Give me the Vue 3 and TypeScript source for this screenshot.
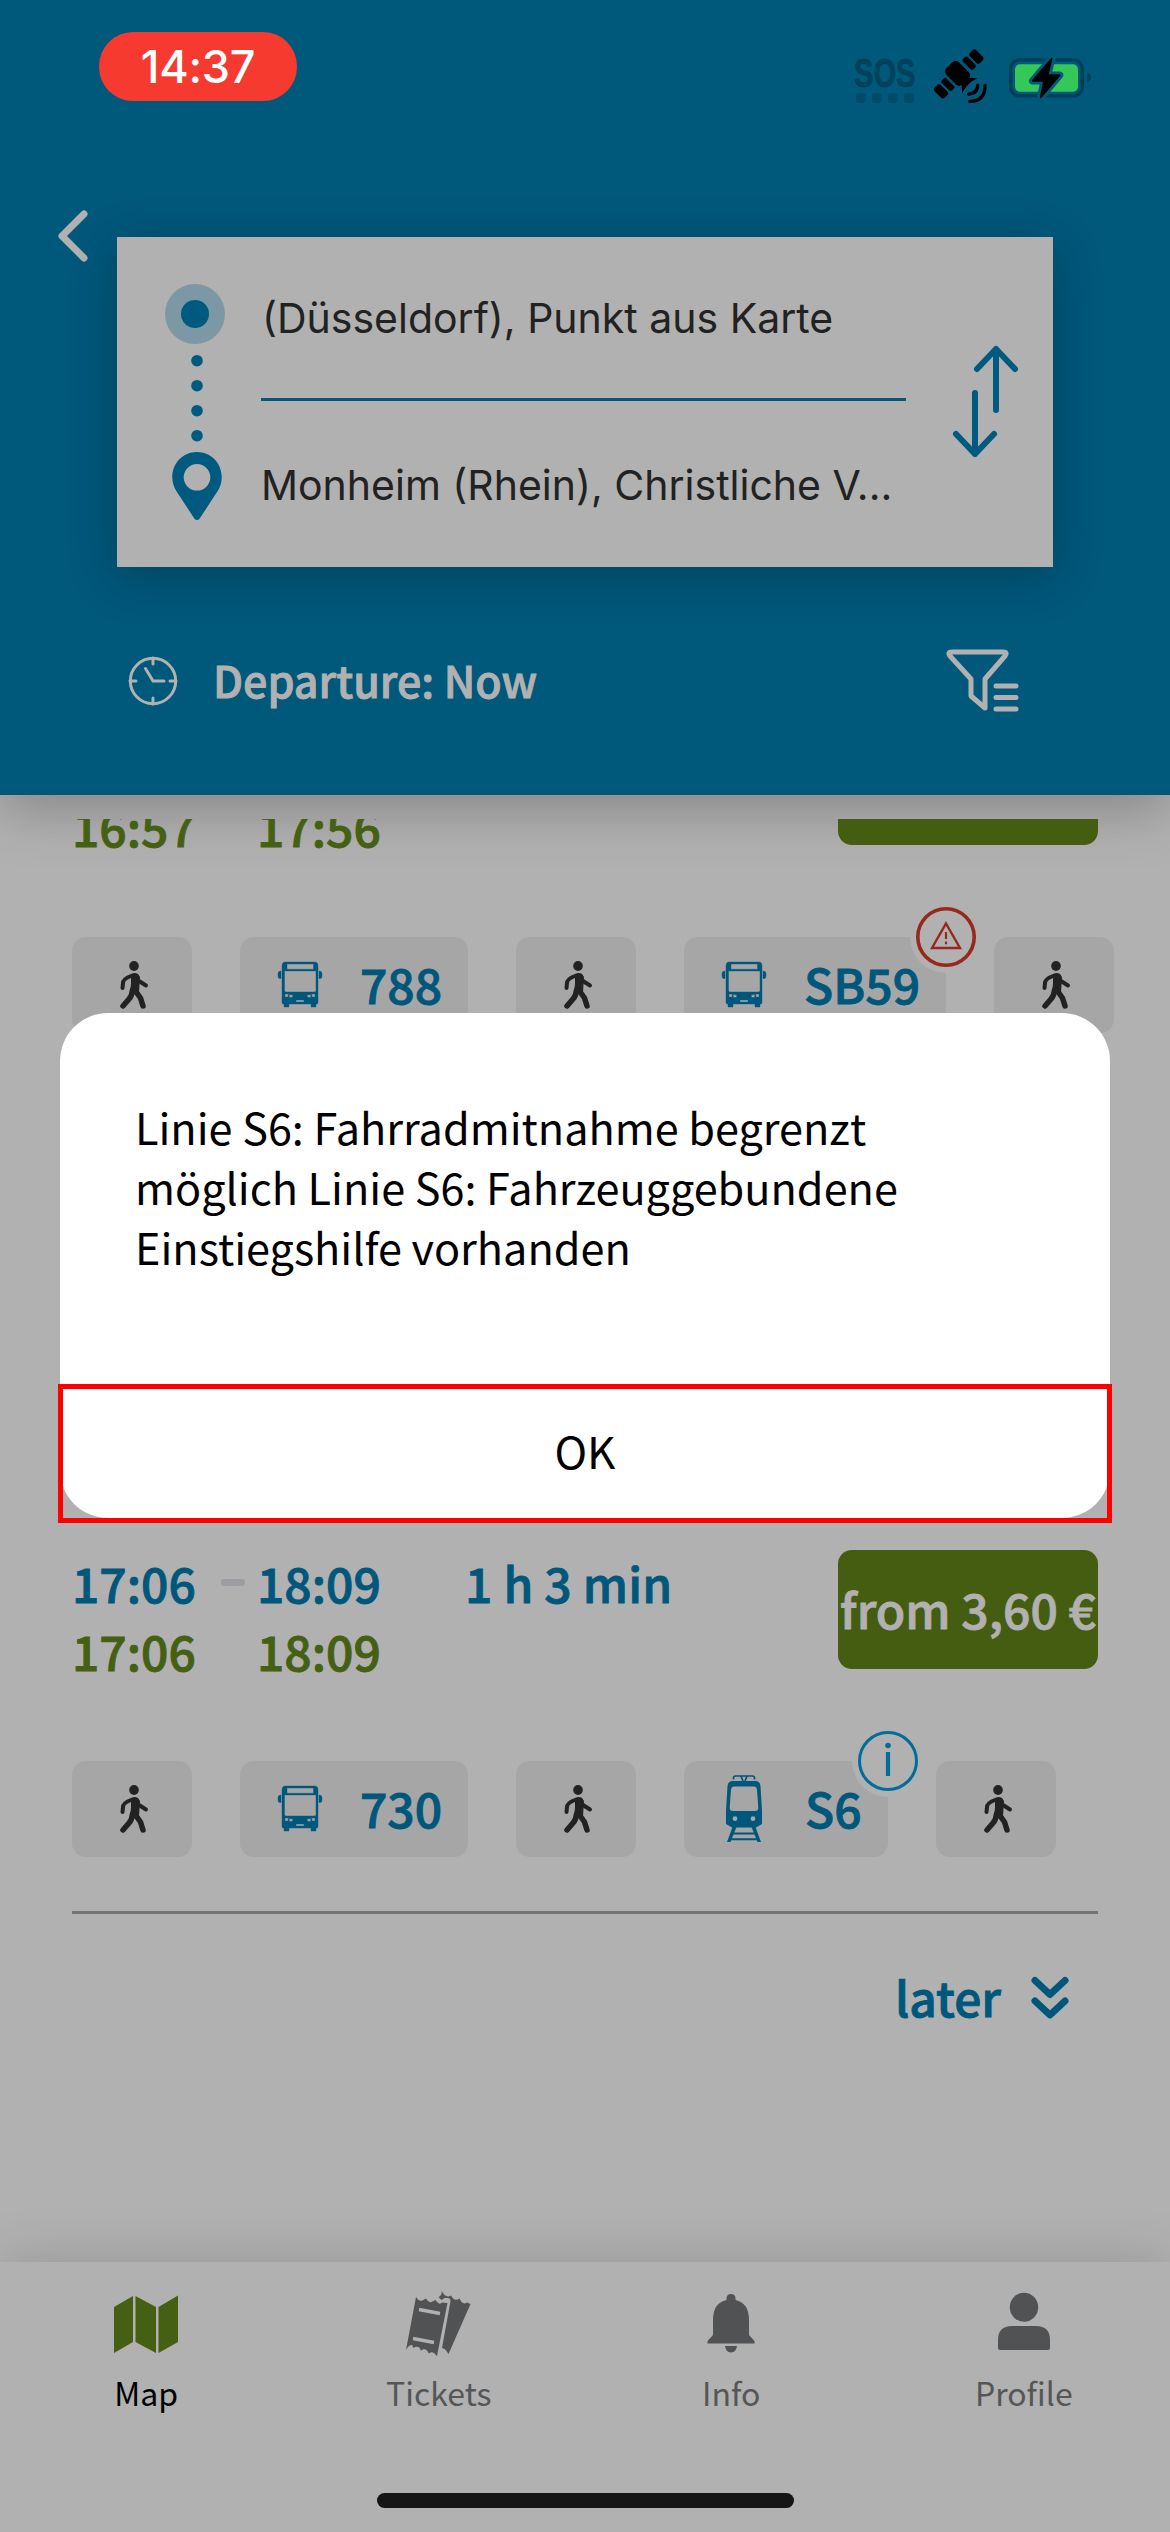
<script setup lang="ts">
type Leg = { kind: 'walk' | 'bus' | 'train'; line?: string; badge?: 'alert' | 'info' }

interface Trip {
  planned?: [string, string]
  actual: [string, string]
  duration?: string
  price?: string
  legs: Leg[]
}

const trips: Trip[] = [
  {
    actual: ['16:57', '17:56'],
    legs: [
      { kind: 'walk' },
      { kind: 'bus', line: '788' },
      { kind: 'walk' },
      { kind: 'bus', line: 'SB59', badge: 'alert' },
      { kind: 'walk' },
    ],
  },
  {
    planned: ['17:06', '18:09'],
    actual: ['17:06', '18:09'],
    duration: '1 h 3 min',
    price: 'from 3,60 €',
    legs: [
      { kind: 'walk' },
      { kind: 'bus', line: '730' },
      { kind: 'walk' },
      { kind: 'train', line: 'S6', badge: 'info' },
      { kind: 'walk' },
    ],
  },
]

const tabs = ['Map', 'Tickets', 'Info', 'Profile']
</script>

<template>
  <div class="screen">
    <header class="header">
      <div class="status">
        <span class="clock-pill">14:37</span>
        <div class="status-icons">
          <div class="sos">
            <span class="sos-text">SOS</span>
            <span class="sos-dots"><i v-for="n in 4" :key="n"></i></span>
          </div>
          <svg class="satellite" viewBox="400 92 163 160">
            <g transform="translate(476 165) rotate(-45)">
              <rect x="-87" y="-22" width="27" height="44" rx="10" />
              <rect x="-54" y="-22" width="20" height="44" rx="6" />
              <rect x="37" y="-22" width="20" height="44" rx="6" />
              <rect x="63" y="-21" width="27" height="44" rx="10" />
              <rect x="-27" y="-38" width="54" height="70" rx="15" />
              <path d="M-13 28h26l20 22q-32-14-66 0z" />
            </g>
            <path d="M535 198q0 26-28 27M557 199q0 48-46 48" fill="none" stroke="#000" stroke-width="10" stroke-linecap="round" />
          </svg>
          <svg class="battery" viewBox="627 110 249 125">
            <rect x="632" y="118" width="215" height="108" rx="27" fill="none" stroke="#003f59" stroke-width="10" />
            <path d="M861 156q12 4 12 16t-12 16z" fill="#003f59" />
            <rect x="645" y="131" width="189" height="83" rx="15" fill="#34c859" />
            <path d="M755 114l-57 67h34l-10 50 57-67h-36z" fill="#00587b" stroke="#00587b" stroke-width="22" stroke-linejoin="round" />
            <path d="M755 114l-57 67h34l-10 50 57-67h-36z" stroke="#000" stroke-width="5" stroke-linejoin="round" />
          </svg>
        </div>
      </div>

      <div class="search-row">
        <svg class="back" viewBox="0 0 30 52"><path d="M26 4L4 26l22 22" /></svg>
        <section class="search-card">
          <svg class="route" viewBox="0 0 60 208">
            <circle cx="30" cy="30" r="30" fill="#7c98a4" />
            <circle cx="30" cy="30" r="14" fill="#005a80" />
            <g fill="#005a80">
              <circle v-for="n in 4" :key="n" cx="32" :cy="51.7 + n * 25" r="5.8" />
              <path fill-rule="evenodd" d="M32 168C18 168 7.300 179 7.300 193c0 5 1 9 4 14l18 27.500q2.700 3 5.400 0l18-27.500c3-5 4-9 4-14C56.700 179 46 168 32 168zm0 12a13.300 13.300 0 1 1 0 26.600 13.300 13.300 0 0 1 0-26.600z" />
            </g>
          </svg>
          <div class="places">
            <div class="place from">(Düsseldorf), Punkt aus Karte</div>
            <div class="rule"></div>
            <div class="place to">Monheim (Rhein), Christliche V...</div>
          </div>
          <svg class="swap" viewBox="0 0 68 112">
            <path d="M45 65V4M26 24L45 4l19 20M24 48v61M5 89l19 20 19-20" />
          </svg>
        </section>
      </div>

      <div class="departure">
        <svg class="clock" viewBox="0 0 50 50">
          <circle cx="25" cy="25" r="22.700" />
          <path d="M25 2v6M25 42v6M2 25h6M42 25h6M17.500 12.500L25 25h11" />
        </svg>
        <span class="departure-text">Departure: Now</span>
        <svg class="filter" viewBox="0 0 74 64">
          <path d="M8 4h51q5 0 2 4L41 31v29L27 48V31L6 8q-3-4 2-4M52 38h20M52 49.500h20M52 61h20" />
        </svg>
      </div>
    </header>

    <main class="results">
      <div class="list">
        <article v-for="(trip, t) in trips" :key="t" class="trip">
          <div class="summary">
            <div class="times">
              <div class="time-row planned">
                <template v-if="trip.planned">
                  <span class="time">{{ trip.planned[0] }}</span>
                  <i class="dash"></i>
                  <span class="time">{{ trip.planned[1] }}</span>
                  <span class="duration">{{ trip.duration }}</span>
                </template>
              </div>
              <div class="time-row actual">
                <span class="time">{{ trip.actual[0] }}</span>
                <i class="dash blank"></i>
                <span class="time">{{ trip.actual[1] }}</span>
              </div>
            </div>
            <div class="price">{{ trip.price }}</div>
          </div>

          <div class="legs">
            <div v-for="(leg, l) in trip.legs" :key="l" class="leg" :class="leg.kind">
              <svg v-if="leg.kind === 'walk'" class="walk-icon" viewBox="0 0 28 48">
                <ellipse cx="14" cy="5" rx="4.800" ry="5" />
                <path d="M11 13q4-2 7 0l2 3-1 15-8 2-1-2 1-8z" />
                <g fill="none" stroke="#222" stroke-linecap="round" stroke-linejoin="round">
                  <path d="M11 15q-8 3-8 7l-.5 5" stroke-width="4" />
                  <path d="M19 20l7 4.500" stroke-width="4" />
                  <path d="M12.500 29q-.5 6-3.500 9l-6 7" stroke-width="5.500" />
                  <path d="M15.500 30l5 7 2.500 8" stroke-width="5.500" />
                </g>
              </svg>
              <svg v-else-if="leg.kind === 'bus'" class="bus-icon" viewBox="0 0 44 45">
                <path fill-rule="evenodd" d="M7 0h30q3 0 3 4v37q0 1-1.500 1H38v3h-5v-3H11v3H6v-3q-2 0-2-1V4q0-4 3-4zM9 2v5.300h26.500V2zM6.500 9v19.500q0 1.500 2 1.500h27.500q2 0 2-1.500V9zM7 32v3h3.200v-3zM11 32.500l4 .5-.8 2.500h-2.700zM37 32v3h-3.200v-3zM33 32.500l-4 .5.800 2.500h2.700zM18 38v2h8v-2z" />
                <path d="M3 9v7.500H1.500Q0 16.500 0 14v-2.500Q0 9 3 9zM41 9v7.500h1.500Q44 16.500 44 14v-2.500Q44 9 41 9z" />
              </svg>
              <svg v-else class="train-icon" viewBox="0 0 36 67">
                <path d="M7.500 4.500V3q0-2 2-2h17q2 0 2 2v1.500M15 1l2 5M21 1l-2 5" fill="none" stroke="#00577c" stroke-width="1.700" />
                <path fill-rule="evenodd" d="M7 6h22q5 0 5.500 5L36 36v13l-6 3.500H6L0 49V36l1.500-25Q2 6 7 6zM8 11.500q-2.500 0-3 3L3.700 33q0 3 3.300 3h22q3.300 0 3.300-3L31 14.500q-.5-3-3-3zM9 41.300a2.400 2.400 0 1 0 0 4.800 2.400 2.400 0 0 0 0-4.800zM27 41.300a2.400 2.400 0 1 0 0 4.800 2.400 2.400 0 0 0 0-4.800z" />
                <path d="M7 58.500h22M5 64.300h26" fill="none" stroke="#00577c" stroke-width="2" />
                <path d="M6.500 52L1 67h3.500L10.500 52zM29.500 52L35 67h-3.500L25.500 52z" />
              </svg>
              <span v-if="leg.line" class="line">{{ leg.line }}</span>

              <svg v-if="leg.badge === 'alert'" class="badge" viewBox="0 0 72 72">
                <circle cx="36" cy="36" r="36" fill="#b1b1b1" />
                <g fill="none" stroke="#96281d">
                  <circle cx="36" cy="36" r="28.200" stroke-width="3.600" />
                  <path d="M36 22.500l14 24.500H22z" stroke-width="2.400" />
                  <path d="M36 31v7M36 40.500v2.800" stroke-width="2.200" />
                </g>
              </svg>
              <svg v-if="leg.badge === 'info'" class="badge" viewBox="0 0 72 72">
                <circle cx="36" cy="36" r="36" fill="#b1b1b1" />
                <circle cx="36" cy="36" r="28.500" fill="none" stroke="#006d9b" stroke-width="3" />
                <circle cx="36" cy="20.500" r="2.800" fill="#006d9b" />
                <path d="M36 27v24" stroke="#006d9b" stroke-width="4.200" />
              </svg>
            </div>
          </div>
          <div class="divider"></div>
        </article>

        <div class="later">
          <span class="later-text">later</span>
          <svg class="later-icon" viewBox="0 0 38 44">
            <path d="M4 4.500l15 14 15-14M4 25l15 14 15-14" />
          </svg>
        </div>
      </div>
    </main>

    <nav class="tabbar">
      <div class="tabs">
        <div v-for="tab in tabs" :key="tab" class="tab" :class="{ active: tab === 'Map' }">
          <svg v-if="tab === 'Map'" class="tab-icon" viewBox="0 0 66 66">
            <path fill="#456013" d="M1 16L20 5v46L1 62zM22.500 5l20.500 11v46L22.500 51zM45.500 16L65 4.500v46.500L45.500 62z" />
          </svg>
          <svg v-else-if="tab === 'Tickets'" class="tab-icon" viewBox="0 0 66 66">
            <path d="M10 6l2 2.500q3 2.500 6 0l2-1 1.500 2q3 3 6 .5l2-1 1.500 2q3 3 5 .5l5.500.5-10.500 53-2.500-2.500q-3-2.500-5.500 0l-2-3q-3-2.500-6 .2l-1.500-3q-3-2-6 .3l-1.500-3Q3 53.500 0 59z" />
            <path d="M35.500 0l3 4q3 2.500 6.500.5l2 3q3 2.500 6.500 0l2 3.500q3 2.500 5.500.5l3.500 1.500-22 50-2-3q-1.500-2.500-4.500-3l8.500-47q0-3-3-3h-3l-3 2-3-3q4-2 3-6z" />
            <path d="M13 18.500l21 4M7 47.500l21 4" stroke="#b1b1b1" stroke-width="3.400" />
          </svg>
          <svg v-else-if="tab === 'Info'" class="tab-icon" viewBox="0 0 66 66">
            <path d="M28.500 9V7.500q0-4.500 4.500-4.500t4.500 4.500V9Q51 12 51 29v15l5.500 6v2.500h-47V50l5.500-6V29Q15 12 28.500 9zM27 55h12q-1 6.500-6 6.500T27 55z" />
          </svg>
          <svg v-else class="tab-icon" viewBox="0 0 66 66">
            <ellipse cx="33" cy="16.300" rx="14.200" ry="14.500" />
            <path d="M7 57V49q0-14 14-14h24q14 0 14 14v8q0 2-2 2H9q-2 0-2-2z" />
          </svg>
          <span class="tab-label">{{ tab }}</span>
        </div>
      </div>
      <div class="home-indicator"></div>
    </nav>

    <div class="dialog">
      <p class="message">
        Linie S6: Fahrradmitnahme begrenzt<br />möglich Linie S6: Fahrzeuggebundene<br />Einstiegshilfe vorhanden
      </p>
      <button class="ok">OK</button>
      <div class="focus-frame"></div>
    </div>
  </div>
</template>

<style>
body {
  margin: 0;
  background: #b1b1b1;
}
</style>

<style scoped>
.screen {
  position: relative;
  display: flex;
  flex-direction: column;
  width: 1170px;
  height: 2532px;
  overflow: hidden;
  background: #b1b1b1;
  font-family: 'Noto Sans CJK SC', 'Noto Sans', sans-serif;
}
svg {
  display: block;
  flex: none;
  overflow: visible;
}
.header {
  box-sizing: border-box;
  height: 795px;
  flex: none;
  background: #00587b;
  box-shadow: 0 12px 54px rgba(0, 0, 0, 0.26);
}
.status {
  display: flex;
  justify-content: space-between;
  height: 210px;
  padding: 32px 81px 0 99px;
  box-sizing: border-box;
}
.clock-pill {
  width: 198px;
  height: 69px;
  border-radius: 34px;
  background: #f63a30;
  color: #fff;
  font: 500 45px/70px Inter, sans-serif;
  text-align: center;
  letter-spacing: -0.3px;
}
.status-icons {
  display: flex;
  align-items: flex-start;
}
.sos {
  width: 61px;
  margin: 16px 18px 0 0;
}
.sos-text {
  display: block;
  height: 45px;
  color: #00415c;
  font: 700 41px/50px 'Liberation Sans', sans-serif;
  -webkit-text-stroke: 0.8px #00415c;
  transform: scaleX(0.71);
  transform-origin: 0 0;
}
.sos-dots {
  display: flex;
  gap: 6px;
  padding-left: 2px;
}
.sos-dots i {
  width: 10px;
  height: 10px;
  border-radius: 3px;
  background: #004b6a;
}
.satellite {
  width: 54px;
  height: 53px;
  margin: 18px 22px 0 0;
}
.battery {
  width: 83px;
  height: 42px;
  margin: 25px -3px 0 0;
}
.search-row {
  display: flex;
  align-items: flex-start;
}
.back {
  width: 30px;
  height: 52px;
  margin-left: 58px;
}
.back path {
  fill: none;
  stroke: #b1b1b1;
  stroke-width: 7px;
  stroke-linecap: round;
  stroke-linejoin: round;
}
.search-card {
  display: flex;
  width: 936px;
  height: 330px;
  margin: 27px 0 0 29px;
  background: #b1b1b1;
  box-shadow: 0 10px 46px rgba(0, 0, 0, 0.24);
}
.route {
  width: 60px;
  height: 208px;
  margin: 47px 0 0 48px;
}
.places {
  width: 645px;
  margin-left: 36px;
}
.place {
  height: 60px;
  white-space: nowrap;
  color: #222;
  font: 400 41px/60px Inter, sans-serif;
}
.from {
  margin: 51px 0 50px 1px;
}
.rule {
  height: 3px;
  background: #0a5675;
}
.to {
  margin-top: 54px;
}
.swap {
  width: 68px;
  height: 112px;
  margin: 108px 0 0 45px;
}
.swap path {
  fill: none;
  stroke: #005a80;
  stroke-width: 6px;
  stroke-linecap: round;
  stroke-linejoin: round;
}
.departure {
  display: flex;
  align-items: flex-start;
  margin-top: 81px;
  padding-left: 128px;
}
.clock {
  width: 50px;
  height: 50px;
  margin-top: 8px;
}
.clock circle,
.clock path {
  fill: none;
  stroke: #b1b1b1;
  stroke-width: 3px;
  stroke-linecap: round;
}
.departure-text,
.time-row,
.price,
.line,
.later-text {
  font-weight: 500;
  -webkit-text-stroke: 0.9px currentColor;
}
.departure-text {
  width: 720px;
  margin-left: 35px;
  color: #b1b1b1;
  font-size: 43px;
  line-height: 62px;
}
.filter {
  width: 74px;
  height: 64px;
  margin-left: 11px;
}
.filter path {
  fill: none;
  stroke: #b1b1b1;
  stroke-width: 5px;
  stroke-linecap: round;
  stroke-linejoin: round;
}
.results {
  flex: 1;
  min-height: 0;
  padding-top: 24px;
}
.list {
  height: 100%;
  overflow: hidden;
}
.trip {
  height: 412px;
  padding: 0 72px;
}
.trip:first-child {
  margin: -94px 0 412px;
}
.summary {
  display: flex;
  justify-content: space-between;
  height: 212px;
}
.time-row {
  display: flex;
  align-items: center;
  height: 68px;
  font-size: 48px;
  line-height: 68px;
}
.times {
  margin-top: -1px;
}
.planned {
  color: #00577c;
}
.actual {
  color: #456013;
}
.time {
  width: 126px;
}
.dash {
  width: 24px;
  height: 7px;
  margin: 0 12px 0 23px;
  border-radius: 3px;
  background: #9b9da3;
}
.blank {
  background: none;
}
.duration {
  margin-left: 82px;
  letter-spacing: 0.15px;
  white-space: nowrap;
}
.price {
  display: flex;
  justify-content: center;
  width: 260px;
  height: 119px;
  margin-top: 1px;
  border-radius: 14px;
  background: #445d10;
  color: #b1b1b1;
  font-size: 48px;
  line-height: 117px;
  white-space: nowrap;
}
.legs {
  display: flex;
  gap: 48px;
  height: 96px;
}
.leg {
  position: relative;
  display: flex;
  flex: none;
  box-sizing: border-box;
  border-radius: 14px;
  background: #a6a6a6;
}
.walk {
  width: 120px;
  padding: 24px 0 0 48px;
}
.walk-icon {
  width: 28px;
  height: 48px;
  fill: #222;
}
.bus,
.train {
  padding-right: 26px;
}
.bus-icon {
  width: 44px;
  height: 45px;
  margin: 25px 38px 0 38px;
  fill: #00577c;
  stroke: #00577c;
  stroke-width: 0.4px;
}
.train-icon {
  width: 36px;
  height: 67px;
  margin: 14px 43px 0 42px;
  fill: #00577c;
}
.line {
  color: #00577c;
  font-size: 48px;
  line-height: 92px;
}
.badge {
  position: absolute;
  top: -36px;
  right: -36px;
  width: 72px;
  height: 72px;
}
.divider {
  height: 3px;
  margin-top: 54px;
  background: #757575;
}
.later {
  display: flex;
  justify-content: flex-end;
  padding-right: 101px;
  color: #00577c;
}
.later-text {
  margin-right: 30px;
  font-size: 48px;
  line-height: 70px;
}
.later-icon {
  width: 38px;
  height: 44px;
  margin-top: 15px;
}
.later-icon path {
  fill: none;
  stroke: #00577c;
  stroke-width: 7px;
  stroke-linecap: round;
  stroke-linejoin: round;
}
.tabbar {
  height: 270px;
  flex: none;
  background: #b1b1b1;
  box-shadow: 0 0 54px rgba(0, 0, 0, 0.16);
}
.tabs {
  display: flex;
  height: 231px;
}
.tab {
  display: flex;
  flex: 1;
  flex-direction: column;
  align-items: center;
  padding-top: 29px;
  color: #555657;
}
.tab-icon {
  width: 66px;
  height: 66px;
  fill: #505254;
}
.tab-label {
  margin-top: 13px;
  font-size: 32px;
  line-height: 44px;
}
.active {
  color: #000;
}
.home-indicator {
  width: 417px;
  height: 15px;
  margin: 0 auto;
  border-radius: 8px;
  background: #151515;
}
.dialog {
  position: absolute;
  top: 1013px;
  left: 60px;
  display: flex;
  flex-direction: column;
  width: 1050px;
  height: 505px;
  border-radius: 48px;
  background: #fff;
}
.message {
  height: 291px;
  margin: 83px 0 0 75px;
  color: #000;
  font-size: 43.2px;
  line-height: 60px;
  white-space: nowrap;
}
.ok {
  flex: 1;
  padding: 0 0 5px;
  border: 0;
  background: none;
  color: #000;
  font: 400 44px/60px 'Noto Sans CJK SC', sans-serif;
}
.focus-frame {
  position: absolute;
  top: 371px;
  left: -2.500px;
  box-sizing: border-box;
  width: 1054px;
  height: 139px;
  border: 5px solid #f00;
}
</style>
